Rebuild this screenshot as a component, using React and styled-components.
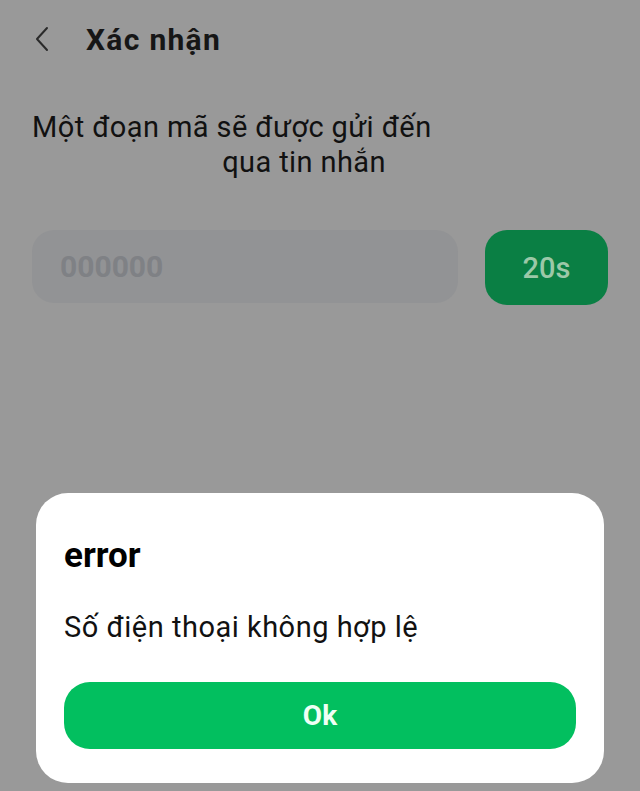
import React from 'react';
import styled, { createGlobalStyle } from 'styled-components';

const GlobalStyle = createGlobalStyle`
  html, body {
    margin: 0;
    padding: 0;
    background: #999999;
    font-family: Roboto, "Noto Sans", "Liberation Sans", sans-serif;
  }
`;

const Page = styled.div`
  width: 640px;
  height: 791px;
  overflow: hidden;
  background: #999999;
  color: #161616;
`;

const Header = styled.div`
  display: flex;
  align-items: center;
  gap: 36px;
  height: 78px;
  padding-left: 34px;
  box-sizing: border-box;
`;

const BackButton = styled.button`
  display: flex;
  padding: 0;
  border: none;
  background: none;
  color: #2a2a2a;
  cursor: pointer;
`;

const Title = styled.h1`
  margin: 0;
  font-size: 30px;
  font-weight: 700;
  letter-spacing: 1.3px;
  color: #161616;
`;

const Body = styled.div`
  padding: 32px 32px 0;
`;

const Message = styled.p`
  display: inline-block;
  margin: 0;
  font-size: 29px;
  letter-spacing: 0.4px;
  line-height: 35px;
  text-align: center;
  color: #111;
`;

const HiddenPhone = styled.span`
  display: inline-block;
  width: 137px;
`;

const CodeRow = styled.div`
  display: flex;
  gap: 27px;
  margin-top: 50px;
`;

const CodeInput = styled.input`
  width: 426px;
  min-width: 0;
  flex: 0 0 auto;
  height: 73px;
  box-sizing: border-box;
  border: none;
  border-radius: 22px;
  padding: 0 28px;
  background: #929395;
  font-family: inherit;
  font-size: 30px;
  font-weight: 700;
  color: #161616;
  outline: none;
  &::placeholder {
    color: #7f8185;
  }
`;

const ResendButton = styled.button`
  width: 123px;
  height: 75px;
  border: none;
  border-radius: 22px;
  background: #0a7f44;
  color: #9cc8a8;
  font-family: inherit;
  font-size: 29px;
  font-weight: 500;
`;

const Dialog = styled.div`
  position: fixed;
  left: 36px;
  top: 493px;
  width: 568px;
  height: 290px;
  box-sizing: border-box;
  padding: 42px 28px 0;
  background: #ffffff;
  border-radius: 32px;
`;

const DialogTitle = styled.h2`
  margin: 0;
  font-size: 35px;
  font-weight: 700;
  color: #000;
`;

const DialogText = styled.p`
  margin: 34px 0 0;
  font-size: 29px;
  letter-spacing: 0.5px;
  color: #111;
`;

const OkButton = styled.button`
  display: block;
  width: 512px;
  height: 67px;
  margin-top: 38px;
  border: none;
  border-radius: 26px;
  background: #02bf5f;
  color: #effff5;
  font-family: inherit;
  font-size: 28px;
  font-weight: 700;
`;

const ChevronLeft = () => (
  <svg width="16" height="26" viewBox="0 0 16 26" fill="none">
    <path d="M13 2 L3 13 L13 24" stroke="currentColor" strokeWidth="2" strokeLinecap="round" strokeLinejoin="round" />
  </svg>
);

export default function App() {
  return (
    <Page>
      <GlobalStyle />
      <Header>
        <BackButton aria-label="back">
          <ChevronLeft />
        </BackButton>
        <Title>Xác nhận</Title>
      </Header>
      <Body>
        <Message>
          Một đoạn mã sẽ được gửi đến
          <br />
          <HiddenPhone /> qua tin nhắn
        </Message>
        <CodeRow>
          <CodeInput placeholder="000000" />
          <ResendButton disabled>20s</ResendButton>
        </CodeRow>
      </Body>
      <Dialog>
        <DialogTitle>error</DialogTitle>
        <DialogText>Số điện thoại không hợp lệ</DialogText>
        <OkButton>Ok</OkButton>
      </Dialog>
    </Page>
  );
}
